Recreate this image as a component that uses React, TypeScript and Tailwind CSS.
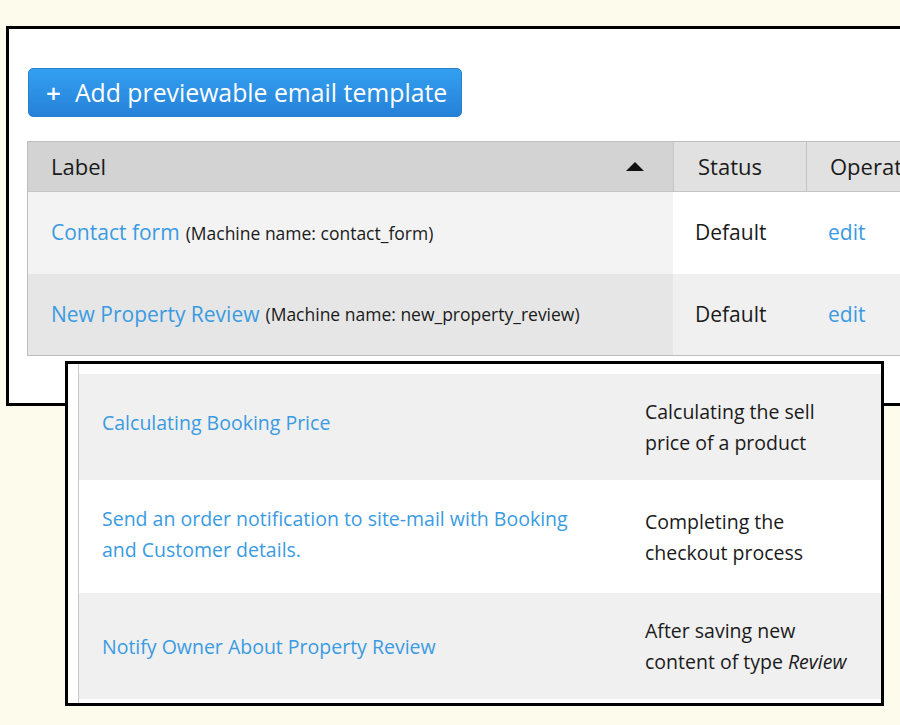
import React from "react";

const templates = [
  { label: "Contact form", machine: "contact_form" },
  { label: "New Property Review", machine: "new_property_review" },
];

const rules = [
  {
    title: ["Calculating Booking Price"],
    event: [<>Calculating the sell</>, <>price of a product</>],
    bg: "bg-[#f0f0f0]",
    h: "h-[106px]",
    nudge: "pb-[9px]",
  },
  {
    title: ["Send an order notification to site-mail with Booking", "and Customer details."],
    event: [<>Completing the</>, <>checkout process</>],
    bg: "bg-white",
    h: "h-[113px]",
    nudge: "pb-[6px]",
  },
  {
    title: ["Notify Owner About Property Review"],
    event: [<>After saving new</>, <>content of type <em>Review</em></>],
    bg: "bg-[#f0f0f0]",
    h: "h-[106px]",
    nudge: "pb-0",
  },
];

export default function App() {
  return (
    <div className="relative h-[725px] w-[900px] overflow-hidden bg-[#fdfbeb] font-['Open_Sans',sans-serif] text-[#1a1a1a]">
      {/* email templates screen */}
      <div className="absolute left-[6px] top-[26px] h-[380px] w-[920px] overflow-hidden border-[3px] border-r-0 border-black bg-white">
        <div className="pl-[19px] pt-[39px]">
          <button className="flex h-[49px] w-[434px] items-center gap-[14px] rounded-[5px] border border-[#2a7fcf] bg-gradient-to-b from-[#33a0f0] to-[#2681d8] pl-[17px] text-[24.8px] text-white">
            <span className="text-[26px] font-semibold leading-none">+</span>
            <span>Add previewable email template</span>
          </button>
        </div>
        <div className="ml-[18px] mt-[24px] w-[920px] border border-[#bebebe]">
          <div className="grid grid-cols-[645px_133px_1fr] border-b border-[#c4c4c4] text-[22px]">
            <div className="flex h-[49px] items-center justify-between bg-[#d3d3d3] pl-[23px] pr-[29px]">
              <span>Label</span>
              <svg width="18" height="9" viewBox="0 0 18 9">
                <path d="M0 9 L9 0 L18 9 Z" fill="#111" />
              </svg>
            </div>
            <div className="flex items-center border-l border-[#c4c4c4] bg-[#e1e1e1] pl-[24px]">Status</div>
            <div className="flex items-center border-l border-[#c4c4c4] bg-[#e1e1e1] pl-[23px]">Operations</div>
          </div>
          {templates.map((t, i) => (
            <div key={t.machine} className={`grid grid-cols-[645px_133px_1fr] ${i === 0 ? "h-[82px]" : "h-[81px]"}`}>
              <div className={`flex items-center pl-[23px] ${i === 0 ? "bg-[#f3f3f3]" : "bg-[#e6e6e6]"}`}>
                <span className="text-[21px] text-[#3a9be2]">{t.label}</span>
                <span className="ml-[6px] text-[17.5px]">(Machine name: {t.machine})</span>
              </div>
              <div className={`flex items-center pl-[22px] text-[21px] ${i === 0 ? "bg-white" : "bg-[#f0f0f0]"}`}>Default</div>
              <div className={`flex items-center pl-[22px] text-[21px] text-[#3a9be2] ${i === 0 ? "bg-white" : "bg-[#f0f0f0]"}`}>edit</div>
            </div>
          ))}
        </div>
      </div>

      {/* rules screen */}
      <div className="absolute left-[65px] top-[361px] h-[345px] w-[819px] overflow-hidden border-[3px] border-black bg-white">
        <div className="h-full pl-[10px]">
          <div className="h-full border-l border-[#c8c8c8] pt-[10px]">
            {rules.map((r) => (
              <div key={r.title[0]} className={`grid grid-cols-[543px_1fr] items-center text-[19.5px] leading-[31px] ${r.bg} ${r.h}`}>
                <div className={`pl-[23px] text-[#3a9be2] ${r.nudge}`}>
                  {r.title.map((line) => (
                    <div key={line}>{line}</div>
                  ))}
                </div>
                <div className="pl-[23px]">
                  {r.event.map((line, j) => (
                    <div key={j}>{line}</div>
                  ))}
                </div>
              </div>
            ))}
          </div>
        </div>
      </div>
    </div>
  );
}
